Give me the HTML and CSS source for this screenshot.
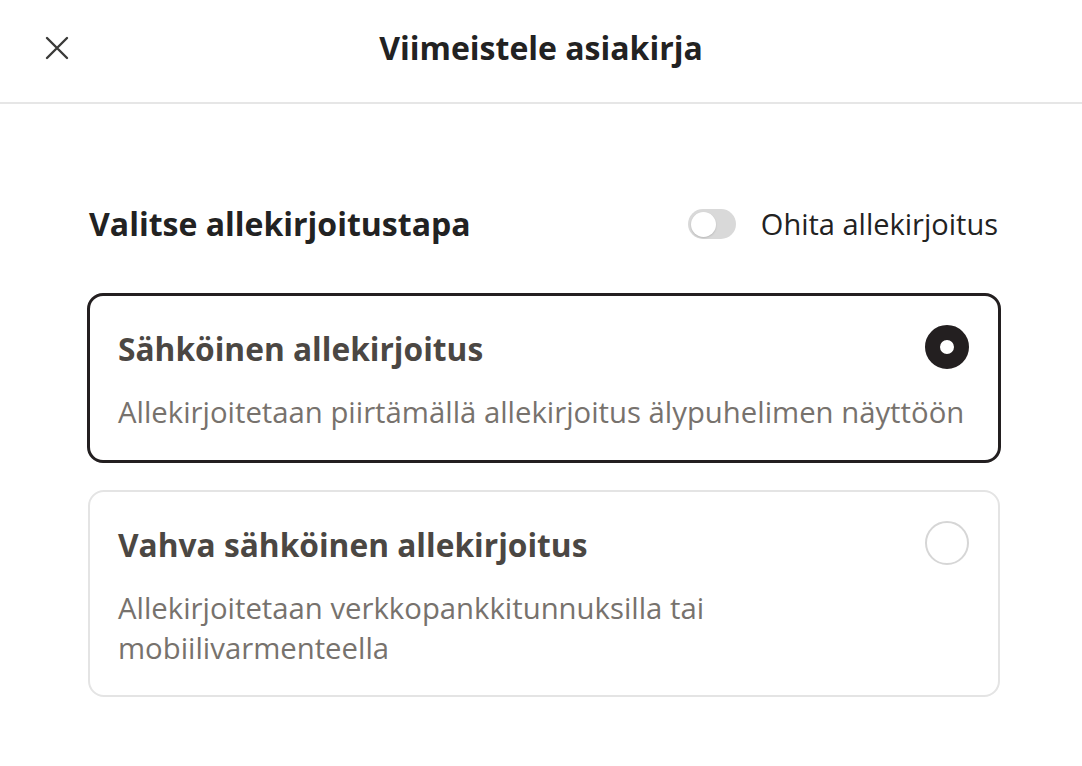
FILE: index.html
```html
<!DOCTYPE html>
<html lang="fi">
<head>
<meta charset="utf-8">
<title>Viimeistele asiakirja</title>
<link rel="stylesheet" href="styles.css">
</head>
<body>
<header class="topbar">
  <button class="close" aria-label="Sulje">
    <svg width="24" height="24" viewBox="0 0 24 24"><path d="M2 2 L22 22 M22 2 L2 22" stroke="#3a3a38" stroke-width="2.4" stroke-linecap="round" fill="none"/></svg>
  </button>
  <h1 class="title">Viimeistele asiakirja</h1>
</header>
<main class="content">
  <div class="section-head">
    <h2 class="section-title">Valitse allekirjoitustapa</h2>
    <label class="skip">
      <span class="toggle"><span class="knob"></span></span>
      <span class="skip-text">Ohita allekirjoitus</span>
    </label>
  </div>
  <div class="options">
    <div class="card selected">
      <div class="card-row">
        <h3 class="card-title">Sähköinen allekirjoitus</h3>
        <span class="radio checked"></span>
      </div>
      <p class="card-desc">Allekirjoitetaan piirtämällä allekirjoitus älypuhelimen näyttöön</p>
    </div>
    <div class="card">
      <div class="card-row">
        <h3 class="card-title">Vahva sähköinen allekirjoitus</h3>
        <span class="radio"></span>
      </div>
      <p class="card-desc">Allekirjoitetaan verkkopankkitunnuksilla tai<br>mobiilivarmenteella</p>
    </div>
  </div>
</main>
</body>
</html>
```

FILE: styles.css
```css
* { box-sizing: border-box; }
body {
  margin: 0;
  background: #ffffff;
  font-family: "Open Sans", "Noto Sans", sans-serif;
  color: #222;
}
.topbar {
  position: relative;
  height: 104px;
  border-bottom: 2px solid #e6e6e6;
  display: flex;
  align-items: center;
  justify-content: center;
}
.close {
  position: absolute;
  left: 45px;
  top: 36px;
  width: 24px;
  height: 24px;
  padding: 0;
  border: 0;
  background: none;
  display: flex;
}
.title {
  margin: 0;
  font-size: 32px;
  line-height: 36px;
  font-weight: 700;
  color: #222;
  margin-top: -6px;
}
.content {
  padding: 0 81px 0 87px;
}
.section-head {
  margin-top: 102px;
  display: flex;
  align-items: center;
  justify-content: space-between;
  height: 36px;
  padding-left: 2px;
}
.section-title {
  margin: 0;
  font-size: 32px;
  font-weight: 700;
  line-height: 36px;
  color: #222;
}
.skip {
  display: flex;
  align-items: center;
  gap: 25px;
  padding-right: 3px;
}
.toggle {
  width: 48px;
  height: 30px;
  border-radius: 15px;
  background: #d9d9d9;
  display: flex;
  align-items: center;
  padding-left: 3px;
}
.knob {
  width: 25px;
  height: 25px;
  border-radius: 50%;
  background: #fff;
  box-shadow: 0 1px 2px rgba(0,0,0,0.15);
}
.skip-text {
  font-size: 29px;
  line-height: 36px;
  color: #222;
}
.options {
  margin-top: 51px;
  display: flex;
  flex-direction: column;
  gap: 27px;
}
.card {
  border: 2px solid #e4e4e4;
  border-radius: 16px;
  padding: 35px 29px 27px 28px;
  margin: 0 1px;
}
.card.selected {
  border: 3px solid #231f20;
  margin: 0;
  padding-bottom: 28px;
}
.card-row {
  display: flex;
  align-items: center;
  justify-content: space-between;
  height: 36px;
}
.card-title {
  margin: 0;
  font-size: 31.7px;
  line-height: 36px;
  font-weight: 700;
  color: #4b4743;
}
.radio {
  width: 44px;
  height: 44px;
  border-radius: 50%;
  border: 2px solid #d6d6d6;
  margin-top: -4px;
  flex: none;
}
.radio.checked {
  border: 15px solid #231f20;
  background: #fff;
}
.card-desc {
  margin: 25px 0 0;
  font-size: 29.3px;
  line-height: 40px;
  color: #77726d;
}
```
